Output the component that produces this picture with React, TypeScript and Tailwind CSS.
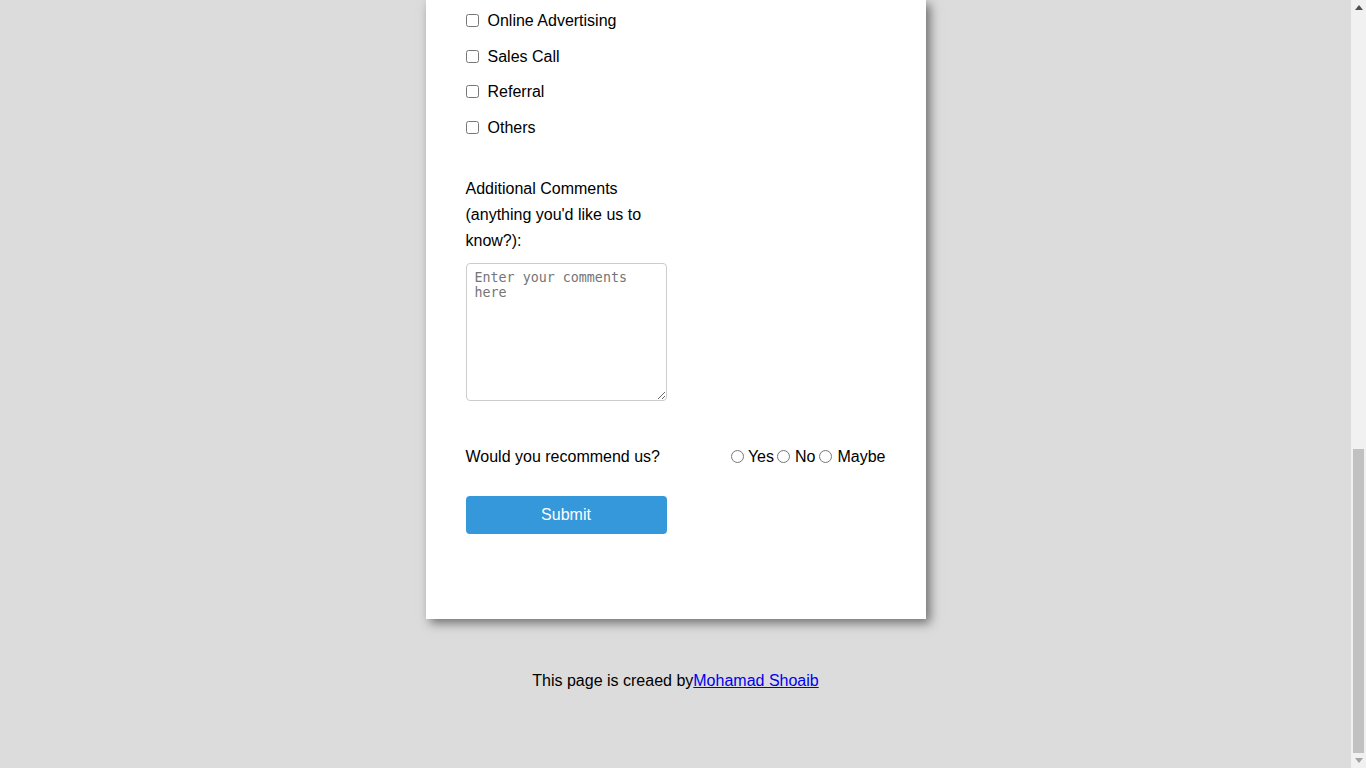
import React from "react";

const sources = ["Online Advertising", "Sales Call", "Referral", "Others"];

function Scrollbar() {
  return (
    <div className="flex h-screen w-[15px] shrink-0 flex-col bg-[#f1f1f1]">
      <div className="flex h-[15px] items-center justify-center">
        <svg width="8" height="5" viewBox="0 0 8 5">
          <polygon points="4,0 8,5 0,5" fill="#505050" />
        </svg>
      </div>
      <div className="flex-1" />
      <div className="mx-[2px] h-[304px] bg-[#c1c1c1]" />
      <div className="flex h-[15px] items-center justify-center">
        <svg width="8" height="5" viewBox="0 0 8 5">
          <polygon points="0,0 8,0 4,5" fill="#a3a3a3" />
        </svg>
      </div>
    </div>
  );
}

export default function App() {
  return (
    <div className="flex h-screen overflow-hidden bg-[#dcdcdc] font-['Liberation_Sans',Arial,sans-serif] text-[16px] leading-[1.6] text-black">
      <div className="flex-1">
        <main className="mx-auto w-[500px] bg-white px-[40px] pt-[8px] pb-[85px] shadow-[4px_4px_10px_rgba(0,0,0,0.5)]">
          <form onSubmit={(e) => e.preventDefault()}>
            <div className="flex flex-col gap-[10px]">
              {sources.map((s) => (
                <label key={s} className="flex h-[25.6px] items-center">
                  <input type="checkbox" className="mr-[9px] h-[13px] w-[13px]" />
                  {s}
                </label>
              ))}
            </div>
            <div className="mt-[36px] w-[210px]">
              <label htmlFor="comments">Additional Comments (anything you'd like us to know?):</label>
            </div>
            <textarea
              id="comments"
              placeholder="Enter your comments here"
              className="mt-[10px] block h-[138px] w-[201px] rounded-[4px] border border-[#ccc] px-[8px] py-[6px] font-['DejaVu_Sans_Mono',monospace] text-[13.33px] leading-[1.15] placeholder:text-[#757575]"
            />
            <div className="mt-[43px] grid grid-cols-2">
              <span>Would you recommend us?</span>
              <div className="flex items-center justify-end">
                <input type="radio" name="rec" className="h-[13px] w-[13px]" />
                <span className="ml-[4px] mr-[3px]">Yes</span>
                <input type="radio" name="rec" className="h-[13px] w-[13px]" />
                <span className="ml-[5px] mr-[4px]">No</span>
                <input type="radio" name="rec" className="h-[13px] w-[13px]" />
                <span className="ml-[5px]">Maybe</span>
              </div>
            </div>
            <button
              type="submit"
              className="mt-[26px] block h-[38px] w-[201px] rounded-[4px] bg-[#3498db] text-[16px] text-white"
            >
              Submit
            </button>
          </form>
        </main>
        <footer className="pt-[49px] text-center">
          This page is creaed by
          <a href="#" className="text-[#0000ee] underline">
            Mohamad Shoaib
          </a>
        </footer>
      </div>
      <Scrollbar />
    </div>
  );
}
